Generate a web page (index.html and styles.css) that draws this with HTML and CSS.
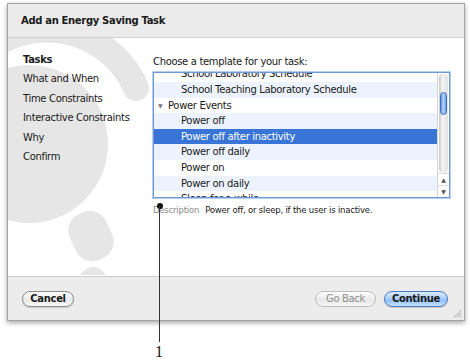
FILE: index.html
```html
<!DOCTYPE html>
<html lang="en">
<head>
  <meta charset="UTF-8" />
  <title>Add an Energy Saving Task</title>
  <link rel="stylesheet" href="styles.css">
</head>
<body>
  <div class="stage">
    <div class="window">
      <div class="titlebar">Add an Energy Saving Task</div>

      <div class="content">
        <!-- faint bulb artwork behind the sidebar -->
        <svg class="art" width="200" height="237" viewBox="0 0 200 237" aria-hidden="true">
          <path d="M -52 55 A 97 97 0 0 1 128 50" fill="none" stroke="#e6e6e6" stroke-width="26" stroke-linecap="round" />
          <circle cx="21" cy="106" r="79" fill="#e6e6e6" />
          <rect x="63" y="173" width="40" height="50" rx="18" fill="#e6e6e6" transform="rotate(-25 83 198)" />
          <ellipse cx="85" cy="252" rx="17" ry="23" fill="#e6e6e6" />
        </svg>

        <ul class="steps">
          <li class="current">Tasks</li>
          <li>What and When</li>
          <li>Time Constraints</li>
          <li>Interactive Constraints</li>
          <li>Why</li>
          <li>Confirm</li>
        </ul>

        <div class="pane">
          <p class="prompt">Choose a template for your task:</p>
          <div class="listbox">
            <div class="rows">
              <div class="rows-inner">
                <div class="row child">School Laboratory Schedule</div>
                <div class="row child alt">School Teaching Laboratory Schedule</div>
                <div class="row group"><span class="disclosure">&#9660;</span>Power Events</div>
                <div class="row child alt">Power off</div>
                <div class="row child selected">Power off after inactivity</div>
                <div class="row child alt">Power off daily</div>
                <div class="row child">Power on</div>
                <div class="row child alt">Power on daily</div>
                <div class="row child">Sleep for a while</div>
              </div>
            </div>
            <div class="scrollbar">
              <div class="track">
                <div class="thumb"></div>
              </div>
              <div class="arrow">&#9650;</div>
              <div class="arrow">&#9660;</div>
            </div>
          </div>
          <p class="description"><span class="label">Description</span>Power off, or sleep, if the user is inactive.</p>
        </div>
      </div>

      <div class="footer">
        <button class="btn">Cancel</button>
        <div class="spacer"></div>
        <button class="btn disabled">Go Back</button>
        <button class="btn default">Continue</button>
        <svg class="grip" width="9" height="9" viewBox="0 0 9 9" aria-hidden="true">
          <path d="M 8.5 1 L 1 8.5 M 8.5 4 L 4 8.5 M 8.5 7 L 7 8.5" stroke="#a0a0a0" stroke-width="1" />
        </svg>
      </div>
    </div>

    <!-- callout 1 -->
    <div class="callout">
      <div class="dot"></div>
      <div class="leader"></div>
      <div class="num">1</div>
    </div>
  </div>
</body>
</html>
```

FILE: styles.css
```css
/* Base */
*, *::before, *::after {
  box-sizing: border-box;
}
body {
  margin: 0;
  background: #fff;
  font-family: "DejaVu Sans", "Liberation Sans", sans-serif;
  font-size: 10px;
  letter-spacing: -0.33px;
  color: #1a1a1a;
}
.stage {
  position: relative;
  width: 470px;
  height: 362px;
  padding: 3px 0 0 7px;
}

/* Sheet window */
.window {
  width: 458px;
  border: 1px solid #a3a3a3;
  box-shadow: 0 2px 5px rgba(0,0,0,0.35);
  background: #ececec;
}
.titlebar {
  height: 34px;
  display: flex;
  align-items: center;
  padding-left: 13px;
  font-weight: bold;
  background: #ebebeb;
  border-bottom: 1px solid #cfcfcf;
}
.content {
  position: relative;
  height: 238px;
  display: flex;
  background: #fff;
  overflow: hidden;
}
.art {
  position: absolute;
  left: 0;
  top: 0;
}

/* Step list */
.steps {
  position: relative;
  list-style: none;
  margin: 0;
  padding: 12px 0 0 15px;
  width: 145px;
  line-height: 19.4px;
}
.steps .current {
  font-weight: bold;
}

/* Template pane */
.pane {
  position: relative;
  flex: 1;
  padding-top: 17px;
}
.prompt {
  margin: 0 0 4px;
  line-height: 13px;
}
.listbox {
  width: 297px;
  height: 126px;
  display: flex;
  border: 1px solid #6f98d8;
  box-shadow: 0 0 0 1px #b4cdf1;
  background: #fff;
}
.rows {
  flex: 1;
  overflow: hidden;
}
.rows-inner {
  margin-top: -6.6px;
}
.row {
  height: 15.6px;
  line-height: 15.6px;
  white-space: nowrap;
}
.row.alt {
  background: #edf3fe;
}
.row.child {
  padding-left: 27px;
}
.row.group {
  padding-left: 4px;
}
.disclosure {
  display: inline-block;
  width: 10px;
  font-size: 6px;
  color: #777;
  vertical-align: 1px;
}
.row.selected {
  background: #3875d7;
  color: #fff;
}

/* Scroller */
.scrollbar {
  width: 12px;
  display: flex;
  flex-direction: column;
  border-left: 1px solid #d4d4d4;
  background: #fff;
}
.track {
  flex: 1;
  margin: 1px 1px 0;
  border-radius: 5px 5px 6px 6px;
  background: linear-gradient(to right, #c9c9c9, #f4f4f4 40%, #e2e2e2);
  padding-top: 18px;
}
.thumb {
  height: 23px;
  margin: 0 1px;
  border-radius: 5px;
  border: 1px solid #3f6fc0;
  background: linear-gradient(to right, #5f94e0, #b9d7fb 45%, #6aa0e8);
}
.arrow {
  height: 12px;
  line-height: 12px;
  text-align: center;
  font-size: 6px;
  color: #555;
  border-top: 1px solid #dcdcdc;
}
.description {
  margin: 6px 0 0;
  line-height: 12px;
  font-size: 8.5px;
  letter-spacing: -0.2px;
}
.description .label {
  color: #8a8a8a;
  margin-right: 6px;
}

/* Footer buttons */
.footer {
  position: relative;
  height: 44px;
  display: flex;
  align-items: center;
  gap: 8px;
  padding: 0 16px 0 14px;
  border-top: 1px solid #cbcbcb;
  background: #ececec;
}
.spacer {
  flex: 1;
}
.btn {
  height: 16px;
  padding: 0;
  border-radius: 8px;
  border: 1px solid #8c8c8c;
  background: linear-gradient(#ffffff, #e9e9e9 55%, #f6f6f6);
  font-family: inherit;
  font-size: 10px;
  letter-spacing: -0.33px;
  font-weight: bold;
  color: #1a1a1a;
  box-shadow: 0 1px 1px rgba(0,0,0,0.15);
  width: 52px;
}
.btn.disabled {
  width: 61px;
  font-weight: normal;
  color: #8e8e8e;
  border-color: #bdbdbd;
  box-shadow: none;
}
.btn.default {
  width: 64px;
  border-color: #4c79c4;
  background: linear-gradient(#dcebfd, #a9cdf8 50%, #8dbdf6 55%, #c6e1ff);
}
.grip {
  position: absolute;
  right: 2px;
  bottom: 2px;
}

/* Callout */
.callout .dot {
  position: absolute;
  left: 157px;
  top: 203px;
  width: 6px;
  height: 6px;
  border-radius: 50%;
  background: #111;
}
.callout .leader {
  position: absolute;
  left: 159px;
  top: 206px;
  width: 1px;
  height: 136px;
  background: #333;
}
.callout .num {
  position: absolute;
  left: 155px;
  top: 343px;
  font-family: "Liberation Serif", serif;
  font-size: 16px;
  line-height: 18px;
  color: #111;
}
```
